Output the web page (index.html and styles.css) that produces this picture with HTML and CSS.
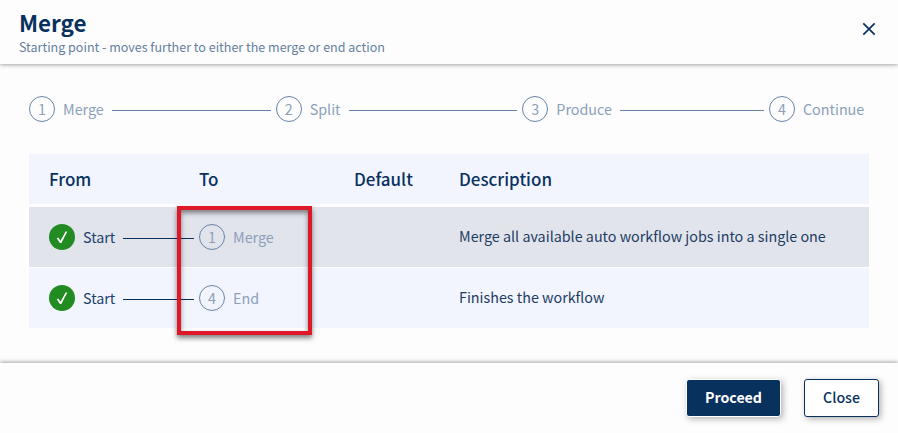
FILE: index.html
```html
<!DOCTYPE html>
<html lang="en">
<head>
<meta charset="utf-8">
<title>Merge</title>
<link rel="stylesheet" href="styles.css">
</head>
<body>
<div class="dialog">
  <header class="header">
    <div class="heading">
      <h1 class="title">Merge</h1>
      <p class="subtitle">Starting point - moves further to either the merge or end action</p>
    </div>
    <button class="dismiss" aria-label="Close dialog">
      <svg width="14" height="14" viewBox="0 0 14 14"><path d="M1.3 1.3 12.7 12.7M12.7 1.3 1.3 12.7"/></svg>
    </button>
  </header>
  <main class="content">
    <div class="steps">
      <div class="step"><span class="circle">1</span><span class="label">Merge</span><i class="line"></i></div>
      <div class="step"><span class="circle">2</span><span class="label">Split</span><i class="line"></i></div>
      <div class="step"><span class="circle">3</span><span class="label">Produce</span><i class="line"></i></div>
      <div class="step"><span class="circle">4</span><span class="label">Continue</span></div>
    </div>
    <div class="table">
      <div class="row head"><span>From</span><span>To</span><span>Default</span><span>Description</span></div>
      <div class="row active">
        <div class="step from"><span class="circle done"><svg width="26" height="26" viewBox="0 0 26 26"><path d="M7.8 14.4 9.3 13.4 11.5 16.8 16.6 7.6 18.3 7.6 12.4 19 11 19Z"/></svg></span><span class="label">Start</span><i class="line"></i></div>
        <div class="step"><span class="circle">1</span><span class="label">Merge</span></div>
        <span></span>
        <span class="description">Merge all available auto workflow jobs into a single one</span>
      </div>
      <div class="row">
        <div class="step from"><span class="circle done"><svg width="26" height="26" viewBox="0 0 26 26"><path d="M7.8 14.4 9.3 13.4 11.5 16.8 16.6 7.6 18.3 7.6 12.4 19 11 19Z"/></svg></span><span class="label">Start</span><i class="line"></i></div>
        <div class="step"><span class="circle">4</span><span class="label">End</span></div>
        <span></span>
        <span class="description">Finishes the workflow</span>
      </div>
      <div class="highlight"></div>
    </div>
  </main>
  <footer class="footer">
    <button class="button primary">Proceed</button>
    <button class="button">Close</button>
  </footer>
</div>
</body>
</html>
```
FILE: styles.css
```css
* { box-sizing: border-box; }
body {
  margin: 0;
  background: #fdfdfd;
  color: #09315e;
  font: 14.33px/26px "Noto Sans CJK SC", "Open Sans", sans-serif;
  overflow: hidden;
}
.dialog { display: flex; flex-direction: column; height: 433px; }
.header {
  display: flex;
  justify-content: space-between;
  height: 64px;
  padding: 7px 22px 0 19px;
  box-shadow: 0 1px 4px rgba(0, 0, 0, .36);
}
.title { margin: 0; font-size: 22.4px; line-height: 31px; font-weight: 700; }
.subtitle { margin: 0; font-size: 12.53px; line-height: 18px; color: #647f9f; }
.dismiss { width: 14px; height: 14px; margin-top: 15px; padding: 0; border: 0; background: none; }
.dismiss svg { display: block; stroke: #09315e; stroke-width: 1.7; fill: none; }
.content { flex: 1; padding: 32px 29px 0; }
.steps { display: grid; grid-template-columns: repeat(3, 246.67px) auto; margin-bottom: 32px; }
.step { display: flex; align-items: center; color: #8b9fb9; white-space: nowrap; }
.circle {
  flex: none;
  width: 26px;
  height: 26px;
  border: 1px solid #6984a5;
  border-radius: 50%;
  text-align: center;
  line-height: 24px;
}
.label { margin-left: 8px; }
.line { flex: 1; height: 1px; margin: 2px 5px 0 8px; background: #6581a5; }
.table { position: relative; }
.row {
  display: grid;
  grid-template-columns: 150px 155px 105px 1fr;
  align-items: center;
  height: 60px;
  padding: 0 20px;
  background: #f2f5fe;
}
.head { height: 50px; font-size: 16.95px; font-weight: 500; }
.active { margin: 3px 0 1px; background: #e2e4ec; }
.from { color: #1c416b; }
.from .line { background: #09315e; }
.done { border: 0; background: #228b22; }
.done svg { display: block; fill: #fff; }
.description { padding-bottom: 2px; color: #1c3c63; white-space: nowrap; }
.highlight {
  position: absolute;
  left: 148px;
  top: 52px;
  width: 135px;
  height: 129px;
  border: 4px solid #df1829;
  box-shadow: 0 3px 5px rgba(0, 0, 0, .5), inset 0 3px 5px rgba(0, 0, 0, .45);
}
.footer {
  display: flex;
  justify-content: flex-end;
  gap: 23px;
  height: 70px;
  padding: 16px 19px 0;
  box-shadow: 0 -1px 4px rgba(0, 0, 0, .36);
}
.button {
  width: 75px;
  height: 38px;
  padding: 0 0 2px;
  border: 1px solid #09315e;
  border-radius: 3px;
  background: #fff;
  color: #09315e;
  font: 500 14.2px/34px "Noto Sans CJK SC", "Open Sans", sans-serif;
  box-shadow: 2px 2px 6px rgba(0, 0, 0, .3);
}
.primary { width: 95px; border-color: #fff; background: #09315e; color: #fff; font-weight: 700; }
```
